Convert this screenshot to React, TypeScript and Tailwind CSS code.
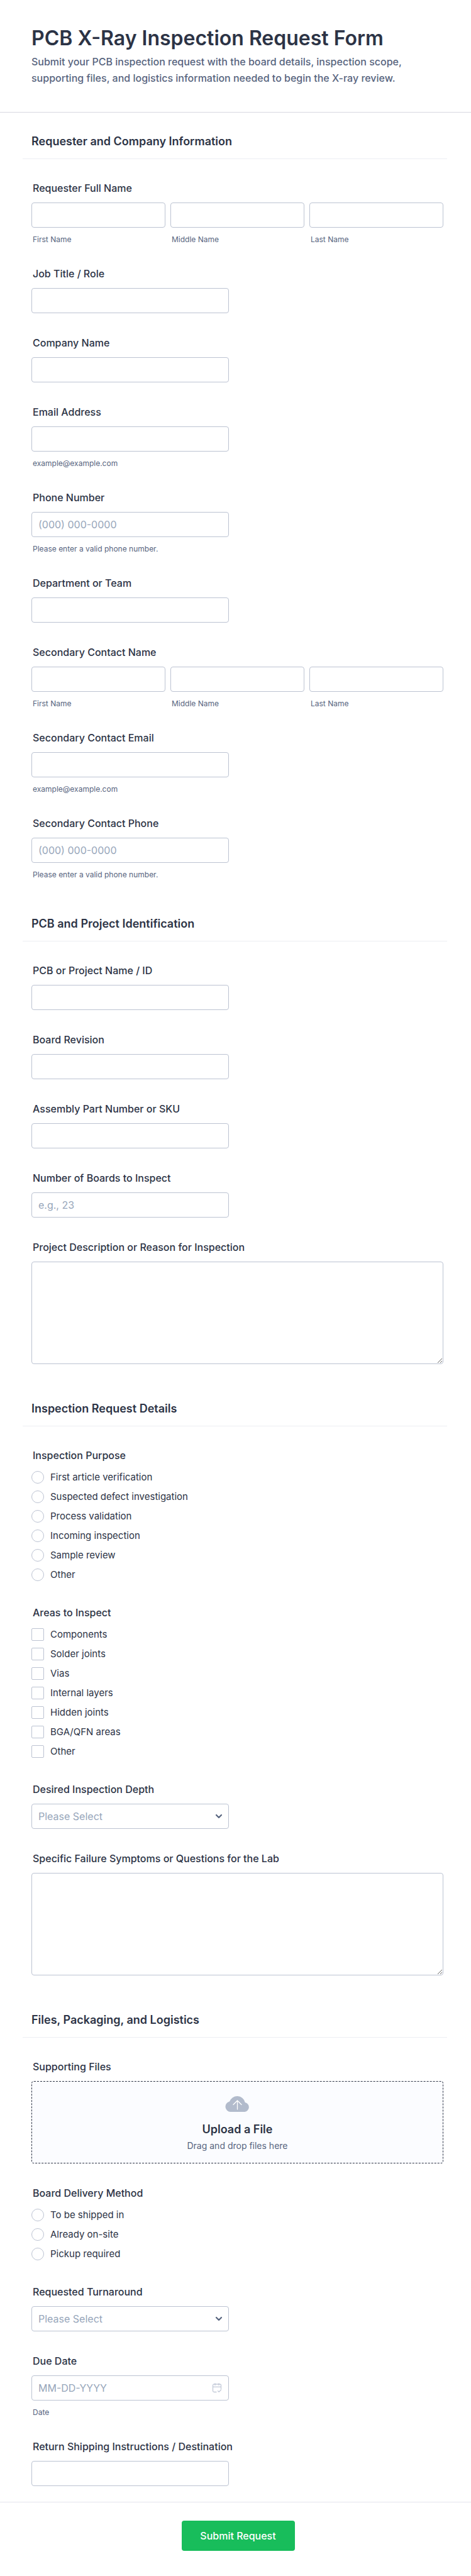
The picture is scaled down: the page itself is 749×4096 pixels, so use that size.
import { ChangeEvent, ReactNode, useState } from "react";

const fieldBox =
  "block w-full rounded-[4px] border border-[#bcc3d2] bg-white px-[10px] text-[16px] text-[#2c3345] placeholder:text-[#97a6ba]";
const labelText = "block px-[2px] text-[16px] leading-5 font-medium text-[#2c3345]";
const subLabelText = "mt-3 block px-[2px] text-[12px] leading-[14px] text-[#57647e]";

interface TextFieldProps {
  id: string;
  label: string;
  type?: string;
  placeholder?: string;
  hint?: string;
}

function TextField({ id, label, type = "text", placeholder, hint }: TextFieldProps) {
  return (
    <div className="w-[48%]">
      <label htmlFor={id} className={`${labelText} mb-[13px] whitespace-nowrap`}>
        {label}
      </label>
      <input id={id} type={type} placeholder={placeholder} className={`${fieldBox} h-10`} />
      {hint && <span className={subLabelText}>{hint}</span>}
    </div>
  );
}

function NameField({ id, label }: { id: string; label: string }) {
  return (
    <fieldset>
      <legend className={`${labelText} mb-[13px]`}>{label}</legend>
      <div className="grid grid-cols-3 gap-2">
        {["First Name", "Middle Name", "Last Name"].map((part, i) => (
          <div key={part}>
            <input id={`${id}-${i}`} type="text" className={`${fieldBox} h-10`} />
            <label htmlFor={`${id}-${i}`} className={subLabelText}>
              {part}
            </label>
          </div>
        ))}
      </div>
    </fieldset>
  );
}

function TextAreaField({ id, label }: { id: string; label: string }) {
  return (
    <div>
      <label htmlFor={id} className={`${labelText} mb-[13px]`}>
        {label}
      </label>
      <textarea id={id} className={`${fieldBox} h-[163px] py-2`} />
    </div>
  );
}

interface ChoiceFieldProps {
  name: string;
  label: string;
  type: "radio" | "checkbox";
  options: string[];
}

function ChoiceField({ name, label, type, options }: ChoiceFieldProps) {
  return (
    <fieldset className="pb-[3px]">
      <legend className={`${labelText} mb-[14px]`}>{label}</legend>
      <div className="flex flex-col items-start gap-[10px]">
        {options.map((option) => (
          <label
            key={option}
            className="flex h-[21px] items-center gap-[10px] text-[15px] leading-5 text-[#2c3345]"
          >
            <input
              type={type}
              name={name}
              value={option}
              className={`size-5 shrink-0 appearance-none border border-[#bcc3d2] bg-white checked:border-[#2c3345] checked:bg-[#2c3345] ${
                type === "radio" ? "rounded-full" : "rounded-[2px]"
              }`}
            />
            {option}
          </label>
        ))}
      </div>
    </fieldset>
  );
}

interface SelectFieldProps {
  id: string;
  label: string;
  options: string[];
}

function SelectField({ id, label, options }: SelectFieldProps) {
  const [value, setValue] = useState("");

  return (
    <div className="w-[48%]">
      <label htmlFor={id} className={`${labelText} mb-[13px]`}>
        {label}
      </label>
      <div className="relative">
        <select
          id={id}
          value={value}
          onChange={(e: ChangeEvent<HTMLSelectElement>) => setValue(e.target.value)}
          className={`${fieldBox} h-10 appearance-none ${value ? "" : "text-[#97a6ba]"}`}
        >
          <option value="">Please Select</option>
          {options.map((option) => (
            <option key={option}>{option}</option>
          ))}
        </select>
        <svg
          viewBox="0 0 12 8"
          className="pointer-events-none absolute top-4 right-[10px] h-2 w-3"
          fill="none"
          stroke="#57647e"
          strokeWidth="2.2"
          strokeLinecap="round"
          strokeLinejoin="round"
        >
          <path d="M2 2l4 4 4-4" />
        </svg>
      </div>
    </div>
  );
}

function DateField() {
  return (
    <div className="w-[48%]">
      <label htmlFor="due-date" className={`${labelText} mb-[13px]`}>
        Due Date
      </label>
      <div className="relative">
        <input
          id="due-date"
          type="text"
          placeholder="MM-DD-YYYY"
          className={`${fieldBox} h-10`}
        />
        <svg
          viewBox="0 0 16 16"
          className="pointer-events-none absolute top-3 right-[11px] size-4"
          fill="none"
          stroke="#c3cad8"
          strokeWidth="1.3"
          strokeLinecap="round"
          strokeLinejoin="round"
        >
          <path d="M7 14.500H3.500a2 2 0 0 1-2-2V4a2 2 0 0 1 2-2h9a2 2 0 0 1 2 2v5.500M1.500 6.300h13M5 .8v2.700M11 .8v2.700M9.500 12.700l1.700 1.600 3.300-3.300" />
        </svg>
      </div>
      <span className={subLabelText}>Date</span>
    </div>
  );
}

function UploadField() {
  return (
    <div>
      <span className={`${labelText} mb-[13px]`}>Supporting Files</span>
      <label
        htmlFor="files"
        className="flex h-[131px] cursor-pointer flex-col items-center rounded-[4px] border border-dashed border-[#2c3345] bg-[#fbfcff] pt-[22px]"
      >
        <svg viewBox="0 0 39 26" className="h-[26px] w-[39px]">
          <path
            d="M8.500 26A8.300 8.300 0 0 1 7 9.600A12.900 12.900 0 0 1 31.700 11A7.600 7.600 0 0 1 31.200 26Z"
            fill="#b2bbcc"
          />
          <path
            d="M19.500 22V8M13 14.500l6.500-6.500 6.500 6.500"
            fill="none"
            stroke="#fff"
            strokeWidth="1.3"
            strokeLinecap="round"
            strokeLinejoin="round"
          />
        </svg>
        <span className="mt-4 text-[18px] leading-6 font-semibold text-[#2c3345]">
          Upload a File
        </span>
        <span className="mt-1 text-[14px] leading-5 text-[#57647e]">
          Drag and drop files here
        </span>
        <input id="files" type="file" multiple className="sr-only" />
      </label>
    </div>
  );
}

function Section({ title, children }: { title: string; children: ReactNode }) {
  return (
    <section className="pt-[34px] pr-[38px] pb-[25px] pl-9">
      <h2 className="border-b border-[#eceef3] pb-[15px] pl-[14px] text-[18px] leading-6 font-semibold text-[#2c3345]">
        {title}
      </h2>
      <div className="flex flex-col gap-[37px] pt-9 pr-[6px] pl-[14px]">{children}</div>
    </section>
  );
}

export default function App() {
  return (
    <form
      className="w-full bg-white font-[Inter,sans-serif]"
      onSubmit={(e) => e.preventDefault()}
    >
      <header className="border-b border-[#d7d8e1] px-[50px] pt-[41px] pb-[41px]">
        <h1 className="text-[32px] leading-10 font-semibold text-[#2c3345]">
          PCB X-Ray Inspection Request Form
        </h1>
        <p className="mt-1 text-[16px] leading-[26px] font-medium text-[#57647e]">
          Submit your PCB inspection request with the board details, inspection scope,
          supporting files, and logistics information needed to begin the X-ray review.
        </p>
      </header>

      <Section title="Requester and Company Information">
        <NameField id="requester" label="Requester Full Name" />
        <TextField id="job-title" label="Job Title / Role" />
        <TextField id="company" label="Company Name" />
        <TextField id="email" label="Email Address" type="email" hint="example@example.com" />
        <TextField
          id="phone"
          label="Phone Number"
          type="tel"
          placeholder="(000) 000-0000"
          hint="Please enter a valid phone number."
        />
        <TextField id="department" label="Department or Team" />
        <NameField id="secondary" label="Secondary Contact Name" />
        <TextField
          id="secondary-email"
          label="Secondary Contact Email"
          type="email"
          hint="example@example.com"
        />
        <TextField
          id="secondary-phone"
          label="Secondary Contact Phone"
          type="tel"
          placeholder="(000) 000-0000"
          hint="Please enter a valid phone number."
        />
      </Section>

      <Section title="PCB and Project Identification">
        <TextField id="project" label="PCB or Project Name / ID" />
        <TextField id="revision" label="Board Revision" />
        <TextField id="sku" label="Assembly Part Number or SKU" />
        <TextField id="boards" label="Number of Boards to Inspect" placeholder="e.g., 23" />
        <TextAreaField id="description" label="Project Description or Reason for Inspection" />
      </Section>

      <Section title="Inspection Request Details">
        <ChoiceField
          name="purpose"
          label="Inspection Purpose"
          type="radio"
          options={[
            "First article verification",
            "Suspected defect investigation",
            "Process validation",
            "Incoming inspection",
            "Sample review",
            "Other",
          ]}
        />
        <ChoiceField
          name="areas"
          label="Areas to Inspect"
          type="checkbox"
          options={[
            "Components",
            "Solder joints",
            "Vias",
            "Internal layers",
            "Hidden joints",
            "BGA/QFN areas",
            "Other",
          ]}
        />
        <SelectField id="depth" label="Desired Inspection Depth" options={[]} />
        <TextAreaField
          id="symptoms"
          label="Specific Failure Symptoms or Questions for the Lab"
        />
      </Section>

      <Section title="Files, Packaging, and Logistics">
        <UploadField />
        <ChoiceField
          name="delivery"
          label="Board Delivery Method"
          type="radio"
          options={["To be shipped in", "Already on-site", "Pickup required"]}
        />
        <SelectField id="turnaround" label="Requested Turnaround" options={[]} />
        <DateField />
        <TextField id="return" label="Return Shipping Instructions / Destination" />
      </Section>

      <footer className="flex justify-center border-t border-[#e3e5ed] pt-[29px] pb-10 pl-2">
        <button
          type="submit"
          className="h-12 w-[180px] rounded-[4px] bg-[#18bd5b] text-[16px] font-medium text-white"
        >
          Submit Request
        </button>
      </footer>
    </form>
  );
}
